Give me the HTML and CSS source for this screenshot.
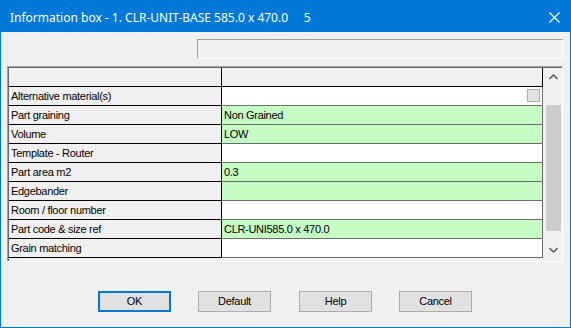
FILE: index.html
```html
<!DOCTYPE html>
<html>
<head>
<meta charset="utf-8">
<link rel="stylesheet" href="styles.css">
</head>
<body>
<div class="window">
  <div class="titlebar">
    <span class="title">Information box - 1. CLR-UNIT-BASE 585.0 x 470.0     5</span>
    <svg class="close" width="11" height="11" viewBox="0 0 11 11"><path d="M0.5 0.5 L10.5 10.5 M10.5 0.5 L0.5 10.5" stroke="#fff" stroke-width="1.1" fill="none"/></svg>
  </div>
  <div class="content">
    <div class="field"></div>
    <div class="frame">
      <div class="grid">
        <div class="row head"><div class="c1"></div><div class="c2"></div></div>
        <div class="row"><div class="c1">Alternative material(s)</div><div class="c2 white"><span class="check"></span></div></div>
        <div class="row"><div class="c1">Part graining</div><div class="c2 green">Non Grained</div></div>
        <div class="row"><div class="c1">Volume</div><div class="c2 green">LOW</div></div>
        <div class="row"><div class="c1">Template - Router</div><div class="c2 white"></div></div>
        <div class="row"><div class="c1">Part area m2</div><div class="c2 green">0.3</div></div>
        <div class="row"><div class="c1">Edgebander</div><div class="c2 green"></div></div>
        <div class="row"><div class="c1">Room / floor number</div><div class="c2 white"></div></div>
        <div class="row"><div class="c1">Part code &amp; size ref</div><div class="c2 green">CLR-UNI585.0 x 470.0</div></div>
        <div class="row"><div class="c1">Grain matching</div><div class="c2 white"></div></div>
      </div>
      <div class="scrollbar">
        <svg class="arrow" width="9" height="6" viewBox="0 0 9 6"><path d="M0.5 5 L4.5 1 L8.5 5" stroke="#606060" stroke-width="1.6" fill="none"/></svg>
        <div class="track"><div class="thumb"></div></div>
        <svg class="arrow" width="9" height="6" viewBox="0 0 9 6"><path d="M0.5 1 L4.5 5 L8.5 1" stroke="#606060" stroke-width="1.6" fill="none"/></svg>
      </div>
    </div>
    <div class="buttons">
      <div class="btn default-btn">OK</div>
      <div class="btn">Default</div>
      <div class="btn">Help</div>
      <div class="btn">Cancel</div>
    </div>
  </div>
</div>
</body>
</html>
```
FILE: styles.css
```css
html, body {
  margin: 0;
  padding: 0;
  background: #f0f0f0;
}
.window {
  width: 571px;
  height: 328px;
  box-sizing: border-box;
  border: 1px solid #0078d7;
  background: #f0f0f0;
  display: flex;
  flex-direction: column;
  overflow: hidden;
}
.titlebar {
  height: 31px;
  background: #0078d7;
  display: flex;
  align-items: center;
  padding-left: 9px;
  padding-right: 10px;
  flex-shrink: 0;
}
.title {
  color: #fff;
  font-family: "Noto Sans", "Open Sans", sans-serif;
  font-size: 12px;
  white-space: pre;
  flex: 1;
  padding-top: 1px;
}
.close {
  display: block;
  margin-top: 1px;
}
.content {
  display: flex;
  flex-direction: column;
  font-family: "Liberation Sans", Arial, sans-serif;
  font-size: 11px;
  letter-spacing: -0.3px;
  color: #000;
}
.field {
  margin-top: 7px;
  margin-left: 196px;
  width: 366px;
  height: 20px;
  box-sizing: border-box;
  border-top: 1px solid #a0a0a0;
  border-left: 1px solid #a0a0a0;
  border-right: 1px solid #fff;
  border-bottom: 1px solid #fff;
  background: #f0f0f0;
}
.frame {
  margin-top: 7px;
  margin-left: 6px;
  width: 556px;
  height: 196px;
  box-sizing: border-box;
  border-top: 1px solid #a0a0a0;
  border-left: 1px solid #a0a0a0;
  border-right: 1px solid #fff;
  border-bottom: 1px solid #fff;
  display: flex;
}
.grid {
  border-top: 1px solid #696969;
  border-left: 1px solid #696969;
  width: 535px;
  display: flex;
  flex-direction: column;
  background: #f0f0f0;
}
.row {
  display: flex;
  height: 19px;
}
.c1 {
  width: 210px;
  height: 18px;
  line-height: 18px;
  border-right: 1px solid #000;
  border-bottom: 1px solid #000;
  padding-left: 2px;
  background: #f0f0f0;
  white-space: nowrap;
}
.c2 {
  width: 318px;
  height: 18px;
  line-height: 18px;
  padding-left: 2px;
  border-right: 1px solid #6d6d6d;
  border-bottom: 1px solid #6d6d6d;
  position: relative;
  white-space: nowrap;
}
.head .c2 {
  background: #f0f0f0;
  border-right-color: #000;
  border-bottom-color: #000;
}
.white { background: #fff; }
.green { background: #c5fdc5; }
.check {
  position: absolute;
  right: 2px;
  top: 2px;
  width: 13px;
  height: 13px;
  box-sizing: border-box;
  border: 1px solid #adadad;
  background: #e1e1e1;
}
.scrollbar {
  width: 18px;
  height: 192px;
  border-top: 1px solid #696969;
  display: flex;
  flex-direction: column;
  align-items: center;
  background: #f0f0f0;
  box-sizing: border-box;
  padding-left: 1px;
}
.arrow {
  display: block;
  flex-shrink: 0;
  margin: 6px 0;
}
.track {
  flex: 1;
  width: 15px;
  padding-top: 19px;
  padding-bottom: 10px;
  display: flex;
  flex-direction: column;
}
.thumb {
  flex: 1;
  background: #cdcdcd;
}
.buttons {
  margin-top: 29px;
  margin-left: 97px;
  display: flex;
  gap: 27px;
}
.btn {
  width: 73px;
  height: 21px;
  box-sizing: border-box;
  border: 1px solid #adadad;
  background: #e1e1e1;
  text-align: center;
  line-height: 19px;
}
.btn:nth-child(3) { margin-left: 1px; }
.default-btn {
  border: 2px solid #0078d7;
  line-height: 17px;
}
```
